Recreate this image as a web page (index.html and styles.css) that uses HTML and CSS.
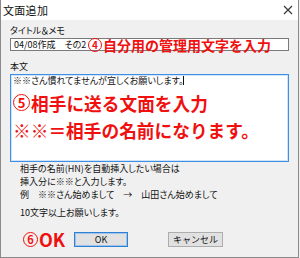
FILE: index.html
```html
<!DOCTYPE html>
<html lang="ja">
<head>
  <meta charset="UTF-8">
  <title>文面追加</title>
  <link rel="stylesheet" href="styles.css">
</head>
<body>
  <div class="window">
    <div class="titlebar">
      <span class="title">文面追加</span>
      <svg class="close" width="10" height="10" viewBox="0 0 10 10">
        <path d="M1 1 L9 9 M9 1 L1 9" stroke="#333" stroke-width="1.1" fill="none"/>
      </svg>
    </div>
    <div class="content">
      <div class="label">タイトル＆メモ</div>
      <div class="field">
        <div class="input">04/08作成　その2</div>
        <span class="note note-title"><span class="circ">4</span>自分用の管理用文字を入力</span>
      </div>
      <div class="label label-body">本文</div>
      <div class="textarea">
        <div class="typed">※※さん慣れてませんが宜しくお願いします。<span class="caret"></span></div>
        <div class="note note-big">
          <div class="big-line"><span class="circ">5</span>相手に送る文面を入力</div>
          <div class="big-line">※※＝相手の名前になります。</div>
        </div>
      </div>
      <div class="help">
        <div>相手の名前(HN)を自動挿入したい場合は</div>
        <div>挿入分に※※と入力します。</div>
        <div>例　※※さん始めまして　→　山田さん始めまして</div>
        <div class="help-last">10文字以上お願いします。</div>
      </div>
      <div class="buttons">
        <span class="note note-ok"><span class="circ">6</span>OK</span>
        <button class="btn btn-default">OK</button>
        <button class="btn">キャンセル</button>
      </div>
    </div>
  </div>
</body>
</html>
```

FILE: styles.css
```css
body {
  margin: 0;
  font-family: 'Noto Sans CJK JP', sans-serif;
  color: #111;
  background: #f0f0f0;
}
.window {
  width: 299px;
  height: 258px;
  box-sizing: border-box;
  border: 1px solid #8a8a8a;
  border-top: none;
  background: #f0f0f0;
}
.titlebar {
  height: 20px;
  background: white;
  display: flex;
  align-items: center;
  justify-content: space-between;
  padding: 0 5px 0 2px;
}
.title {
  font-size: 11px;
  letter-spacing: 0.3px;
}
.content {
  padding: 5px 8px 0 9px;
  font-size: 9px;
  font-feature-settings: "palt";
}
.label {
  line-height: 12px;
  margin-bottom: 1px;
}
.label-body {
  margin-top: 10px;
}
.field {
  position: relative;
}
.input {
  width: 279px;
  height: 13px;
  box-sizing: border-box;
  border: 1px solid #7a7a7a;
  background: white;
  line-height: 11px;
  padding-left: 3px;
}
.note {
  color: #f01010;
  font-weight: bold;
  font-feature-settings: normal;
  white-space: nowrap;
}
.circ {
  display: inline-flex;
  align-items: center;
  justify-content: center;
  box-sizing: border-box;
  border: 1.5px solid #f01010;
  border-radius: 50%;
  line-height: 1;
}
.note-title {
  position: absolute;
  left: 78px;
  top: 0;
  font-size: 14px;
  line-height: 14px;
  display: flex;
  align-items: center;
}
.note-title .circ {
  width: 14px;
  height: 14px;
  margin-right: 1px;
  font-size: 10px;
}
.textarea {
  width: 279px;
  height: 88px;
  box-sizing: border-box;
  border: 1px solid #3c8fe4;
  box-shadow: inset 0 0 0 1px #cfe4f8;
  background: white;
  padding: 0 2px;
}
.typed {
  line-height: 11px;
}
.caret {
  display: inline-block;
  width: 1px;
  height: 9px;
  background: #111;
  vertical-align: -1px;
}
.note-big {
  margin-top: 3px;
  font-size: 17.7px;
}
.big-line {
  height: 27px;
  display: flex;
  align-items: center;
}
.note-big .circ {
  width: 17px;
  height: 17px;
  margin-right: 1px;
  font-size: 13px;
}
.help {
  padding-left: 10px;
  line-height: 13px;
}
.help-last {
  margin-top: 5px;
}
.buttons {
  position: relative;
  display: flex;
  gap: 40px;
  margin-top: 13px;
  padding-left: 64px;
}
.note-ok {
  position: absolute;
  left: 13px;
  top: -2px;
  font-size: 18px;
  line-height: 19px;
  display: flex;
  align-items: center;
}
.note-ok .circ {
  width: 15px;
  height: 15px;
  margin-right: 1px;
  font-size: 11px;
}
.btn {
  width: 55px;
  height: 15px;
  padding: 0;
  background: #e1e1e1;
  border: 1px solid #adadad;
  font-family: inherit;
  font-size: 9px;
  line-height: 13px;
  color: #111;
}
.btn-default {
  width: 54px;
  border-color: #2f7fd3;
  box-shadow: inset 0 0 0 1px #9cc4ec;
}
```
